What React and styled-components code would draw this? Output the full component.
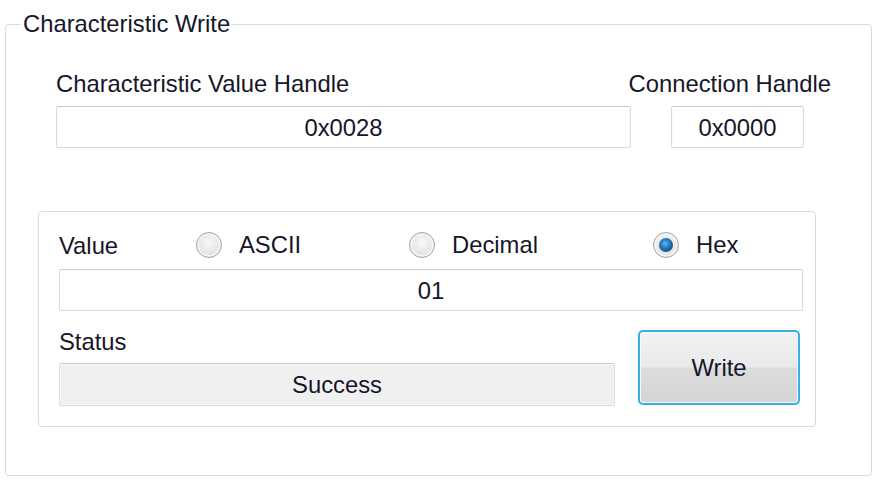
import React from 'react';
import styled, { createGlobalStyle } from 'styled-components';

const GlobalStyle = createGlobalStyle`
  html, body {
    margin: 0;
    padding: 0;
    background: #ffffff;
  }
  body {
    font-family: "Liberation Sans", Arial, sans-serif;
    color: #16162a;
  }
`;

const GroupBox = styled.fieldset`
  box-sizing: border-box;
  margin: 12px 0 0 5px;
  padding: 0;
  width: 867px;
  height: 464px;
  border: 1px solid #d6dde2;
  border-radius: 4px;
  min-width: 0;
`;

const Legend = styled.legend`
  margin-left: 15px;
  padding: 0 2px;
  font-size: 23.8px;
  line-height: 24px;
`;

const LabelRow = styled.div`
  display: flex;
  margin-top: 34px;
  padding: 0 40px 0 50px;
`;

const Label = styled.span`
  font-size: 23.8px;
  line-height: 28px;
  white-space: nowrap;
  &:last-child:not(:first-child) {
    margin-left: auto;
  }
`;

const InputRow = styled.div`
  display: flex;
  gap: 40px;
  margin-top: 8px;
  padding-left: 50px;
`;

const TextBox = styled.div`
  box-sizing: border-box;
  width: ${(p) => p.$width}px;
  height: ${(p) => p.$height || 42}px;
  display: flex;
  align-items: center;
  justify-content: center;
  border: 1px solid #dadada;
  border-top-color: #cbcbcb;
  border-radius: 2px;
  background: ${(p) => (p.$readonly ? '#f0f0f0' : '#ffffff')};
  box-shadow: inset 0 0 0 1px ${(p) => (p.$readonly ? '#f4f4f4' : '#fbfbfb')};
  font-size: 23.8px;
  padding-top: 1px;
`;

const InnerGroup = styled.div`
  box-sizing: border-box;
  margin: 63px 0 0 32px;
  width: 778px;
  height: 216px;
  border: 1px solid #d6dde2;
  border-radius: 4px;
  padding: 17px 13px 0 19px;
`;

const RadioRow = styled.div`
  display: grid;
  grid-template-columns: 137px 213px 244px auto;
  align-items: center;
  height: 28px;
  padding-left: 1px;
  & > span:first-child {
    padding-top: 3px;
  }
`;

const RadioOption = styled.label`
  display: flex;
  align-items: center;
  gap: 17px;
  font-size: 23.8px;
  line-height: 28px;
`;

const RadioDot = styled.span`
  box-sizing: border-box;
  width: 26px;
  height: 26px;
  border-radius: 50%;
  border: 1px solid #a4a4a4;
  display: flex;
  align-items: center;
  justify-content: center;
  background: radial-gradient(circle at 50% 40%, #f8f8f8 0%, #e6e6e6 55%, #cfcfcf 100%);
  box-shadow: inset 0 0 0 2px #f4f4f4;
  &::after {
    content: '';
    display: ${(p) => (p.$checked ? 'block' : 'none')};
    width: 14px;
    height: 14px;
    border-radius: 50%;
    background: radial-gradient(circle at 45% 40%, #5fb8ea 0%, #1c72b8 45%, #0c3667 100%);
  }
`;

const ValueBox = styled(TextBox)`
  margin: 12px 0 0 1px;
`;

const BottomRow = styled.div`
  display: flex;
  align-items: flex-start;
  gap: 23px;
  margin-top: 17px;
  padding-left: 1px;
`;

const StatusColumn = styled.div`
  display: flex;
  flex-direction: column;
  gap: 7px;
`;

const WriteButton = styled.button`
  box-sizing: border-box;
  margin-top: 2px;
  width: 162px;
  height: 75px;
  border: 2px solid #3aaee2;
  border-radius: 5px;
  box-shadow: inset 0 0 0 1px #f8fcff;
  background: linear-gradient(
    to bottom,
    #f2f2f2 0%,
    #eaeaea 49%,
    #dcdcdc 51%,
    #d4d4d4 100%
  );
  font-family: "Liberation Sans", Arial, sans-serif;
  font-size: 23.8px;
  color: #16162a;
  padding: 0;
`;

export default function App() {
  return (
    <>
      <GlobalStyle />
      <GroupBox>
        <Legend>Characteristic Write</Legend>
        <LabelRow>
          <Label>Characteristic Value Handle</Label>
          <Label>Connection Handle</Label>
        </LabelRow>
        <InputRow>
          <TextBox $width={575}>0x0028</TextBox>
          <TextBox $width={133}>0x0000</TextBox>
        </InputRow>
        <InnerGroup>
          <RadioRow>
            <Label>Value</Label>
            <RadioOption>
              <RadioDot />
              ASCII
            </RadioOption>
            <RadioOption>
              <RadioDot />
              Decimal
            </RadioOption>
            <RadioOption>
              <RadioDot $checked />
              Hex
            </RadioOption>
          </RadioRow>
          <ValueBox $width={744}>01</ValueBox>
          <BottomRow>
            <StatusColumn>
              <Label>Status</Label>
              <TextBox $width={556} $height={43} $readonly>
                Success
              </TextBox>
            </StatusColumn>
            <WriteButton>Write</WriteButton>
          </BottomRow>
        </InnerGroup>
      </GroupBox>
    </>
  );
}
